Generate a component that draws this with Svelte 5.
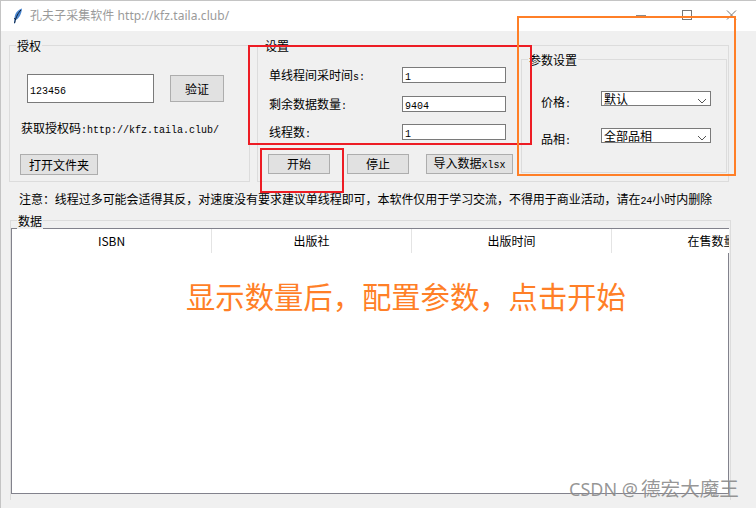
<script>
  const columns = ['ISBN', '出版社', '出版时间', '在售数量'];
</script>

<div class="window">
  <header class="titlebar">
    <svg class="feather" width="10" height="16" viewBox="0 0 10 16">
      <path d="M9 0.5C5 1.5 2 5 1.5 10L1 15.5L2 15.5L2.6 12C6 11 8.5 6 9 0.5Z" fill="#4a86d0" />
      <path d="M8 2C5.5 4.5 3 8.5 1.6 15" fill="none" stroke="#0b1c33" stroke-width="1" />
      <path d="M1.5 10C1.8 11 2.2 11.6 2.8 12" fill="none" stroke="#10203a" stroke-width="1" />
    </svg>
    <span class="title">孔夫子采集软件 http://kfz.taila.club/</span>
    <div class="controls">
      <svg width="11" height="11" viewBox="0 0 11 11"><path d="M0 5.5H10" stroke="#8a8a8a" /></svg>
      <svg width="11" height="11" viewBox="0 0 11 11"><rect x="1.5" y="0.5" width="9" height="9" fill="none" stroke="#777" /></svg>
      <svg width="11" height="11" viewBox="0 0 11 11"><path d="M1 0.5L10 9.5M10 0.5L1 9.5" stroke="#777" /></svg>
    </div>
  </header>

  <section class="top">
    <div class="group auth">
      <span class="legend">授权</span>
      <div class="auth-row">
        <div class="entry big"><span class="en">123456</span></div>
        <button class="verify">验证</button>
      </div>
      <p class="code">获取授权码<span class="en">:http://kfz.taila.club/</span></p>
      <button class="open">打开文件夹</button>
    </div>

    <div class="group settings">
      <span class="legend">设置</span>
      <div class="settings-left">
        <div class="form">
          <span>单线程间采时间<span class="en">s:</span></span>
          <div class="entry"><span class="en">1</span></div>
          <span>剩余数据数量<span class="en">:</span></span>
          <div class="entry"><span class="en">9404</span></div>
          <span>线程数<span class="en">:</span></span>
          <div class="entry"><span class="en">1</span></div>
        </div>
        <div class="actions">
          <button class="small">开始</button>
          <button class="small">停止</button>
          <button class="import">导入数据<span class="en">xlsx</span></button>
        </div>
      </div>
      <div class="group params">
        <span class="legend">参数设置</span>
        <div class="param-form">
          <span class="param-label">价格<span class="en">:</span></span>
          <div class="combo">
            <span>默认</span>
            <svg width="10" height="6" viewBox="0 0 10 6"><path d="M1 1L5 5L9 1" fill="none" stroke="#555" /></svg>
          </div>
          <span class="param-label">品相<span class="en">:</span></span>
          <div class="combo">
            <span>全部品相</span>
            <svg width="10" height="6" viewBox="0 0 10 6"><path d="M1 1L5 5L9 1" fill="none" stroke="#555" /></svg>
          </div>
        </div>
      </div>
    </div>
  </section>

  <p class="notice">注意&#xFF1A;线程过多可能会适得其反&#xFF0C;对速度没有要求建议单线程即可&#xFF0C;本软件仅用于学习交流&#xFF0C;不得用于商业活动&#xFF0C;请在<span class="en">24</span>小时内删除</p>

  <section class="group data">
    <span class="legend">数据</span>
    <div class="table">
      <div class="thead">
        {#each columns as col}
          <div class="th">{col}</div>
        {/each}
      </div>
      <div class="tbody"></div>
    </div>
  </section>

  <div class="mark red-a"></div>
  <div class="mark red-b"></div>
  <div class="mark orange"></div>
  <div class="hint">显示数量后&#xFF0C;配置参数&#xFF0C;点击开始</div>
  <div class="watermark">CSDN @<span class="wm-cjk">德宏大魔王</span></div>
</div>

<style>
  :global(body) {
    margin: 0;
    background: #f0f0f0;
  }

  .window {
    position: relative;
    width: 756px;
    height: 508px;
    box-sizing: border-box;
    overflow: hidden;
    background: #f0f0f0;
    border-left: 1px solid #c4c4c4;
    font: 12px/16px "Noto Sans CJK SC", sans-serif;
    color: #000;
  }

  .en {
    font-family: "Liberation Mono", monospace;
    font-size: 10px;
  }

  .titlebar {
    display: flex;
    align-items: center;
    height: 30px;
    background: #fff;
    border-top: 1px solid #c4c4c4;
  }
  .feather {
    margin-left: 12px;
  }
  .title {
    margin-left: 7px;
    color: #9a9a9a;
    font-family: "Noto Sans", "Noto Sans CJK SC", sans-serif;
    font-size: 12px;
    letter-spacing: 0.06px;
  }
  .controls {
    display: flex;
    gap: 34px;
    margin-left: auto;
    margin-right: 19px;
    margin-top: -2px;
  }

  .top {
    display: flex;
    gap: 7px;
    margin: 14px 0 0 8px;
  }

  .group {
    position: relative;
    box-sizing: border-box;
    border: 1px solid #dcdcdc;
  }
  .legend {
    position: absolute;
    top: -8px;
    left: 6px;
    padding: 0 1px;
    background: #f0f0f0;
  }

  .auth {
    width: 241px;
    height: 137px;
    padding: 28px 0 0 17px;
  }
  .auth-row {
    display: flex;
    align-items: center;
    gap: 16px;
  }
  .code {
    height: 16px;
    margin: 17px 0 0 -6px;
    line-height: 16px;
  }
  .open {
    width: 78px;
    height: 21px;
    margin: 18px 0 0 -7px;
  }

  button {
    display: block;
    box-sizing: border-box;
    padding: 0;
    background: #e1e1e1;
    border: 1px solid #adadad;
    border-radius: 0;
    font: inherit;
    color: #000;
  }
  .verify {
    width: 54px;
    height: 27px;
  }

  .entry {
    box-sizing: border-box;
    height: 16px;
    padding-left: 2px;
    background: #fff;
    border: 1px solid #7a7a7a;
    line-height: 14px;
  }
  .entry.big {
    width: 127px;
    height: 29px;
    line-height: 27px;
  }

  .settings {
    display: flex;
    width: 472px;
    height: 137px;
  }
  .settings-left {
    width: 263px;
    padding: 21px 0 0 11px;
    box-sizing: border-box;
  }
  .form {
    display: grid;
    grid-template-columns: 133px 104px;
    grid-auto-rows: 16px;
    row-gap: 12.5px;
  }
  .actions {
    display: flex;
    gap: 17px;
    margin: 14px 0 0 -1px;
  }
  .small {
    width: 62px;
    height: 20px;
  }
  .import {
    width: 87px;
    height: 20px;
  }

  .params {
    width: 206px;
    height: 114px;
    margin-top: 13px;
  }
  .param-form {
    display: grid;
    grid-template-columns: 60px 110px;
    grid-auto-rows: 15px;
    row-gap: 22px;
    align-items: start;
    padding: 31px 0 0 19px;
  }
  .param-label {
    margin-top: 3px;
  }
  .combo {
    display: flex;
    align-items: center;
    justify-content: space-between;
    box-sizing: border-box;
    height: 15px;
    padding: 0 3px 0 2px;
    overflow: hidden;
    background: #fff;
    border: 1px solid #7a7a7a;
    line-height: 13px;
  }
  .combo svg {
    margin-top: 4px;
  }

  .notice {
    margin: 9px 0 0 18px;
    letter-spacing: -0.05px;
    white-space: nowrap;
  }

  .data {
    width: 721px;
    height: 280px;
    margin: 10px 0 0 9px;
    border-bottom: none;
  }
  .table {
    box-sizing: border-box;
    width: 718px;
    height: 266px;
    margin-top: 7px;
    background: #fff;
    border-top: 1px solid #82828c;
    border-bottom: 1px solid #82828c;
    border-left: 1px solid #82828c;
    display: flex;
    flex-direction: column;
    overflow: hidden;
  }
  .thead {
    display: flex;
    height: 24px;
    flex: none;
  }
  .th {
    flex: none;
    box-sizing: border-box;
    width: 200px;
    line-height: 24px;
    text-align: center;
    border-right: 1px solid #e4e4e4;
  }
  .tbody {
    flex: 1;
    border-right: 1px solid #82828c;
  }

  .mark {
    position: absolute;
    box-sizing: border-box;
    border: 2px solid #ed1c24;
  }
  .red-a {
    left: 247px;
    top: 45px;
    width: 284px;
    height: 100px;
  }
  .red-b {
    left: 259px;
    top: 148px;
    width: 84px;
    height: 45px;
  }
  .orange {
    left: 516px;
    top: 16px;
    width: 219px;
    height: 160px;
    border-color: #ff7f27;
  }

  .hint {
    position: absolute;
    left: 185px;
    top: 273px;
    font-size: 29.33px;
    line-height: 44px;
    color: #ff7f27;
    white-space: nowrap;
  }
  .watermark {
    position: absolute;
    left: 568px;
    top: 476px;
    font-family: "Noto Sans", "Noto Sans CJK SC", sans-serif;
    font-size: 18px;
    line-height: 26px;
    color: rgba(110, 110, 110, 0.72);
    text-shadow: 0 0 1px rgba(255, 255, 255, 0.6);
    white-space: nowrap;
  }
  .wm-cjk {
    margin-left: 3px;
    font-size: 19.6px;
  }
</style>
